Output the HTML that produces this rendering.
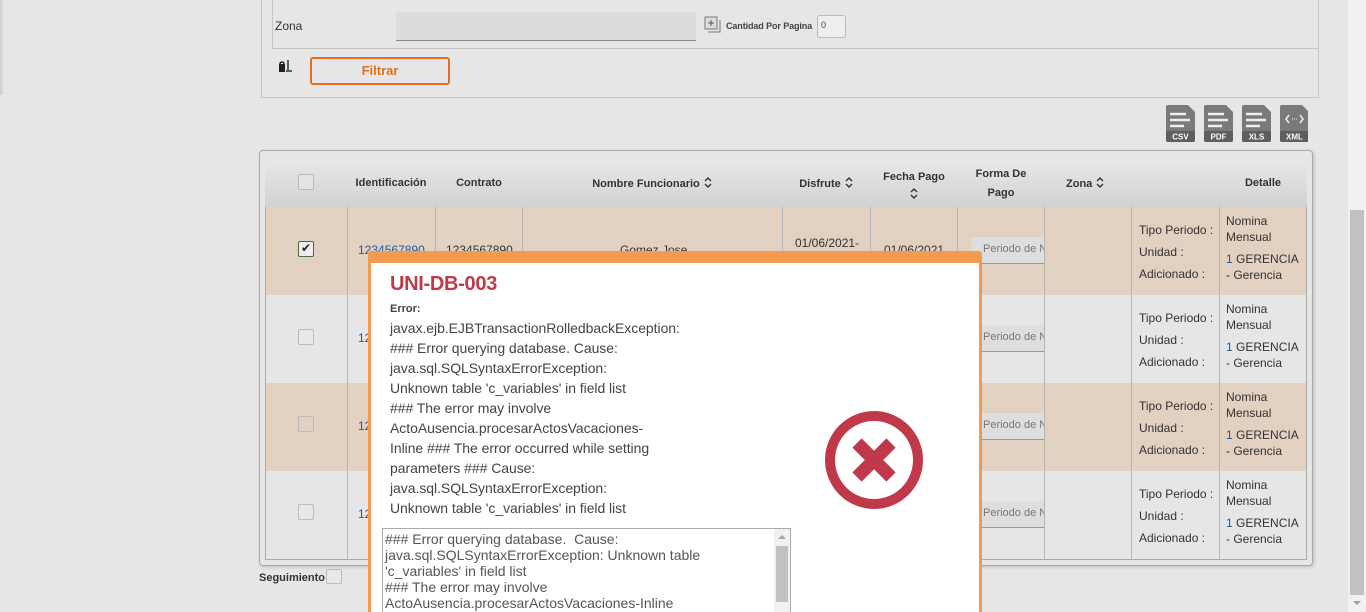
<!DOCTYPE html>
<html style="overflow:hidden;height:612px"><head><meta charset="utf-8"><style>
*{box-sizing:border-box;margin:0;padding:0}
body{width:1366px;height:612px;overflow:hidden;background:#e6e6e6;font-family:"Liberation Sans",Arial,sans-serif;color:#333;position:relative}
.a{position:absolute}
.hd{font-size:11px;font-weight:bold;color:#333;text-align:center}
.cb{width:16px;height:16px;border:1px solid #bbb;border-radius:2px;background:#e8e8e8}
.t{font-size:12px;color:#333}
.s{display:inline-block;vertical-align:-1px;margin-left:4px}
</style></head><body>
<div class="a" style="left:0;top:0;width:4px;height:95px;background:linear-gradient(90deg,#ccc,#e6e6e6)"></div>
<div class="a" style="left:261px;top:-2px;width:1058px;height:100px;border:1px solid #c6c6c6"></div>
<div class="a" style="left:272px;top:-2px;width:1046px;height:51px;border:1px solid #c6c6c6;border-top:none;border-right:none"></div>
<div class="a t" style="left:275px;top:19px;font-size:12px">Zona</div>
<div class="a" style="left:396px;top:12px;width:300px;height:29px;background:#dcdcdc;border-bottom:1px solid #888"></div>
<svg class="a" style="left:704px;top:16px" width="18" height="18" viewBox="0 0 18 18"><rect x="1" y="1" width="12" height="12" fill="#ddd" stroke="#777"/><path d="M4 16h12V4" fill="none" stroke="#777"/><path d="M7 4v6M4 7h6" stroke="#555"/></svg>
<div class="a" style="left:726px;top:21px;font-size:9px;font-weight:bold;color:#444;letter-spacing:-0.1px">Cantidad Por Pagina</div>
<div class="a" style="left:817px;top:15px;width:29px;height:23px;border:1px solid #bbb;border-radius:3px;background:#eee;font-size:9px;padding:4px 3px;color:#444">0</div>
<svg class="a" style="left:278px;top:59px" width="16" height="14" viewBox="0 0 16 14"><path d="M1 5h6v8H1z" fill="#222"/><path d="M2 5a2 2 0 0 1 4 0" fill="none" stroke="#222" stroke-width="1.5"/><path d="M10 1v10M8 12h6" stroke="#333" stroke-width="1.5"/></svg>
<div class="a" style="left:310px;top:57px;width:140px;height:28px;border:2px solid #e0701f;border-radius:3px;color:#e0701f;font-weight:bold;font-size:13px;text-align:center;line-height:24px">Filtrar</div>
<svg class="a" style="left:1166px;top:105px" width="142" height="37" viewBox="0 0 142 37">
<g font-family="Liberation Sans" font-weight="bold" font-size="8" fill="#fff" text-anchor="middle">
<g><path d="M0 2a2 2 0 0 1 2-2h20l7 7v28a2 2 0 0 1-2 2H2a2 2 0 0 1-2-2z" fill="#7a7a7a"/><rect x="0" y="26" width="29" height="11" rx="2" fill="#5e5e5e"/><path d="M4 9h16M4 15h20M4 21h14" stroke="#eee" stroke-width="2.5"/><text x="14.5" y="34.5">CSV</text></g>
<g transform="translate(38,0)"><path d="M0 2a2 2 0 0 1 2-2h20l7 7v28a2 2 0 0 1-2 2H2a2 2 0 0 1-2-2z" fill="#7a7a7a"/><rect x="0" y="26" width="29" height="11" rx="2" fill="#5e5e5e"/><path d="M4 9h16M4 15h20M4 21h14" stroke="#eee" stroke-width="2.5"/><text x="14.5" y="34.5">PDF</text></g>
<g transform="translate(76,0)"><path d="M0 2a2 2 0 0 1 2-2h20l7 7v28a2 2 0 0 1-2 2H2a2 2 0 0 1-2-2z" fill="#7a7a7a"/><rect x="0" y="26" width="29" height="11" rx="2" fill="#5e5e5e"/><path d="M4 9h16M4 15h20M4 21h14" stroke="#eee" stroke-width="2.5"/><text x="14.5" y="34.5">XLS</text></g>
<g transform="translate(114,0)"><path d="M0 2a2 2 0 0 1 2-2h20l7 7v28a2 2 0 0 1-2 2H2a2 2 0 0 1-2-2z" fill="#7a7a7a"/><rect x="0" y="26" width="29" height="11" rx="2" fill="#5e5e5e"/><path d="M9 10l-3 4 3 4M20 10l3 4-3 4" fill="none" stroke="#eee" stroke-width="1.5"/><path d="M12 14h1M14 14h1M16 14h1" stroke="#eee"/><text x="14.5" y="34.5">XML</text></g>
</g></svg>
<div class="a" style="left:259px;top:150px;width:1054px;height:416px;border:1px solid #aaa;border-radius:4px;box-shadow:1px 1px 3px #bbb"></div>
<div class="a" style="left:265px;top:163px;width:1042px;height:44px;background:linear-gradient(#e6e6e6,#d2d2d2)"></div>
<div class="a cb" style="left:298px;top:174px;background:#e4e4e4"></div>
<div class="a hd" style="left:347px;top:177px;width:88px">Identificación</div>
<div class="a hd" style="left:435px;top:177px;width:88px">Contrato</div>
<div class="a hd" style="left:522px;top:177px;width:260px">Nombre Funcionario<svg class="s" width="8" height="11" viewBox="0 0 8 11"><path d="M1 4l3-3 3 3M1 7l3 3 3-3" fill="none" stroke="#333" stroke-width="1.4"/></svg></div>
<div class="a hd" style="left:782px;top:177px;width:88px">Disfrute<svg class="s" width="8" height="11" viewBox="0 0 8 11"><path d="M1 4l3-3 3 3M1 7l3 3 3-3" fill="none" stroke="#333" stroke-width="1.4"/></svg></div>
<div class="a hd" style="left:870px;top:168px;width:88px;line-height:18px">Fecha Pago<br><svg width="8" height="11" viewBox="0 0 8 11" style="vertical-align:-1px"><path d="M1 4l3-3 3 3M1 7l3 3 3-3" fill="none" stroke="#333" stroke-width="1.4"/></svg></div>
<div class="a hd" style="left:957px;top:165px;width:88px;line-height:19px">Forma De<br>Pago</div>
<div class="a hd" style="left:1044px;top:177px;width:88px;text-align:left;padding-left:22px">Zona<svg class="s" width="8" height="11" viewBox="0 0 8 11"><path d="M1 4l3-3 3 3M1 7l3 3 3-3" fill="none" stroke="#333" stroke-width="1.4"/></svg></div>
<div class="a hd" style="left:1219px;top:177px;width:88px">Detalle</div>
<div class="a" style="left:265px;top:207px;width:1042px;height:88px;background:#e2d0c0"></div>
<div class="a" style="left:265px;top:383px;width:1042px;height:88px;background:#e2d0c0"></div>
<div class="a" style="left:265px;top:559px;width:1042px;height:1px;background:#aaa"></div>
<div class="a" style="left:265px;top:207px;width:1px;height:353px;background:#aaa"></div>
<div class="a" style="left:347px;top:207px;width:1px;height:353px;background:#b5b5b5"></div>
<div class="a" style="left:435px;top:207px;width:1px;height:353px;background:#b5b5b5"></div>
<div class="a" style="left:522px;top:207px;width:1px;height:353px;background:#b5b5b5"></div>
<div class="a" style="left:782px;top:207px;width:1px;height:353px;background:#b5b5b5"></div>
<div class="a" style="left:870px;top:207px;width:1px;height:353px;background:#b5b5b5"></div>
<div class="a" style="left:957px;top:207px;width:1px;height:353px;background:#b5b5b5"></div>
<div class="a" style="left:1044px;top:207px;width:1px;height:353px;background:#b5b5b5"></div>
<div class="a" style="left:1131px;top:207px;width:1px;height:353px;background:#b5b5b5"></div>
<div class="a" style="left:1219px;top:207px;width:1px;height:353px;background:#b5b5b5"></div>
<div class="a" style="left:1306px;top:207px;width:1px;height:353px;background:#aaa"></div>
<div class="a cb" style="left:298px;top:241px;border:1px solid #4a6b3a;background:#eee;font-size:12px;line-height:13px;text-align:center;color:#222">✔</div>
<div class="a cb" style="left:298px;top:329px"></div>
<div class="a cb" style="left:298px;top:416px;background:#e2d0c0"></div>
<div class="a cb" style="left:298px;top:504px"></div>
<div class="a t" style="left:358px;top:243px;color:#1a5f9a">1234567890</div>
<div class="a t" style="left:446px;top:243px;color:#333">1234567890</div>
<div class="a t" style="left:620px;top:243px">Gomez Jose</div>
<div class="a t" style="left:795px;top:236px">01/06/2021-</div>
<div class="a t" style="left:884px;top:243px">01/06/2021</div>
<div class="a t" style="left:358px;top:331px;color:#1a5f9a">12</div>
<div class="a t" style="left:358px;top:419px;color:#1a5f9a">12</div>
<div class="a t" style="left:358px;top:507px;color:#1a5f9a">12</div>
<div class="a" style="left:971px;top:237px;width:73px;height:27px;background:#dedede;border-bottom:1px solid #999;font-size:11px;color:#777;padding:6px 0 0 12px;white-space:nowrap;overflow:hidden;border-radius:3px 0 0 0">Periodo de N</div>
<div class="a" style="left:971px;top:325px;width:73px;height:27px;background:#dedede;border-bottom:1px solid #999;font-size:11px;color:#777;padding:6px 0 0 12px;white-space:nowrap;overflow:hidden">Periodo de N</div>
<div class="a" style="left:971px;top:413px;width:73px;height:27px;background:#dedede;border-bottom:1px solid #999;font-size:11px;color:#777;padding:6px 0 0 12px;white-space:nowrap;overflow:hidden">Periodo de N</div>
<div class="a" style="left:971px;top:501px;width:73px;height:27px;background:#dedede;border-bottom:1px solid #999;font-size:11px;color:#777;padding:6px 0 0 12px;white-space:nowrap;overflow:hidden">Periodo de N</div>
<div class="a t" style="left:1139px;top:219px;line-height:22px">Tipo Periodo :<br>Unidad :<br>Adicionado :</div>
<div class="a t" style="left:1226px;top:213px;line-height:16px">Nomina<br>Mensual<br><span style="display:block;height:6px"></span><span style="color:#1a5f9a">1</span> GERENCIA<br>- Gerencia</div>
<div class="a t" style="left:1139px;top:307px;line-height:22px">Tipo Periodo :<br>Unidad :<br>Adicionado :</div>
<div class="a t" style="left:1226px;top:301px;line-height:16px">Nomina<br>Mensual<br><span style="display:block;height:6px"></span><span style="color:#1a5f9a">1</span> GERENCIA<br>- Gerencia</div>
<div class="a t" style="left:1139px;top:395px;line-height:22px">Tipo Periodo :<br>Unidad :<br>Adicionado :</div>
<div class="a t" style="left:1226px;top:389px;line-height:16px">Nomina<br>Mensual<br><span style="display:block;height:6px"></span><span style="color:#1a5f9a">1</span> GERENCIA<br>- Gerencia</div>
<div class="a t" style="left:1139px;top:483px;line-height:22px">Tipo Periodo :<br>Unidad :<br>Adicionado :</div>
<div class="a t" style="left:1226px;top:477px;line-height:16px">Nomina<br>Mensual<br><span style="display:block;height:6px"></span><span style="color:#1a5f9a">1</span> GERENCIA<br>- Gerencia</div>
<div class="a" style="left:259px;top:572px;font-size:11px;font-weight:bold;color:#333">Seguimiento</div>
<div class="a cb" style="left:326px;top:569px;width:16px;height:15px"></div>
<div class="a" style="left:1348px;top:0;width:18px;height:612px;background:#f1f1f1"></div>
<div class="a" style="left:1350px;top:210px;width:14px;height:385px;background:#c1c1c1"></div>
<div class="a" style="left:1353px;top:601px;width:0;height:0;border-left:4px solid transparent;border-right:4px solid transparent;border-top:4px solid #a3a3a3"></div>
<div class="a" style="left:368px;top:251px;width:614px;height:361px;background:#f39a50;border-radius:3px 3px 0 0"></div>
<div class="a" style="left:371px;top:263px;width:608px;height:349px;background:#fff"></div>
<div class="a" style="left:390px;top:273px;font-size:20px;font-weight:bold;color:#c0394b;letter-spacing:-0.3px">UNI-DB-003</div>
<div class="a" style="left:390px;top:303px;font-size:11px;font-weight:bold;color:#444">Error:</div>
<div class="a" style="left:390px;top:318px;font-size:14px;line-height:20px;color:#444;letter-spacing:-0.05px;width:330px;white-space:nowrap">javax.ejb.EJBTransactionRolledbackException:<br>### Error querying database. Cause:<br>java.sql.SQLSyntaxErrorException:<br>Unknown table 'c_variables' in field list<br>### The error may involve<br>ActoAusencia.procesarActosVacaciones-<br>Inline ### The error occurred while setting<br>parameters ### Cause:<br>java.sql.SQLSyntaxErrorException:<br>Unknown table 'c_variables' in field list</div>
<svg class="a" style="left:824px;top:410px" width="100" height="100" viewBox="0 0 100 100"><circle cx="50" cy="50" r="44" fill="none" stroke="#c0394b" stroke-width="10"/><path d="M33 33L67 67M67 33L33 67" stroke="#c0394b" stroke-width="13"/></svg>
<div class="a" style="left:382px;top:528px;width:409px;height:90px;border:1px solid #aaa;background:#fff"></div>
<div class="a" style="left:385px;top:531px;font-size:14px;line-height:16px;color:#555;letter-spacing:0px;white-space:pre">### Error querying database.  Cause:
java.sql.SQLSyntaxErrorException: Unknown table
'c_variables' in field list
### The error may involve
ActoAusencia.procesarActosVacaciones-Inline</div>
<div class="a" style="left:774px;top:529px;width:16px;height:88px;background:#f1f1f1"></div>
<div class="a" style="left:776px;top:546px;width:12px;height:56px;background:#c1c1c1"></div>
<div class="a" style="left:778px;top:535px;width:0;height:0;border-left:4px solid transparent;border-right:4px solid transparent;border-bottom:4px solid #a3a3a3"></div>
</body></html>
